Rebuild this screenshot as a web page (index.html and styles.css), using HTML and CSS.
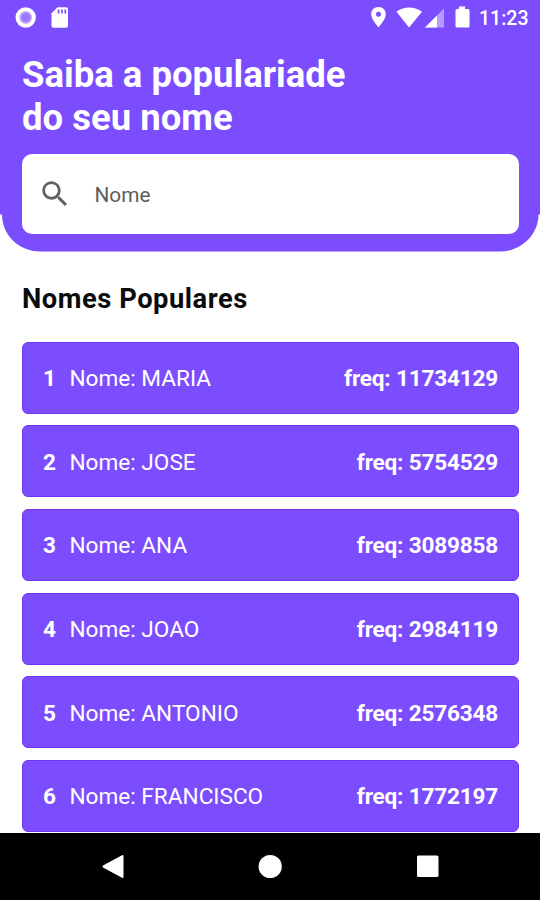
FILE: index.html
```html
<!DOCTYPE html>
<html lang="pt-BR">
<head>
<meta charset="utf-8">
<title>Nomes Populares</title>
<link rel="stylesheet" href="styles.css">
</head>
<body>
<header class="header">
  <div class="status">
    <svg class="status-left" width="60" height="36" viewBox="0 0 60 36">
      <circle cx="15.700" cy="17.5" r="8.2" fill="#b79bff" stroke="#fff" stroke-width="4"/>
      <circle cx="15.700" cy="17.5" r="4.3" fill="#9c78ff"/>
      <path fill="#fff" d="M47.5 7.2H56Q58 7.2 58 9.2V25.8Q58 27.8 56 27.8H43.500Q41.500 27.800 41.500 25.800V13.200Z"/>
      <path stroke="#7c4dff" stroke-width="1.7" d="M48.600 9.500v4M52 9.500v4M55.300 9.500v4"/>
    </svg>
    <svg class="status-right" width="104" height="36" viewBox="0 0 104 36">
      <path fill="#fff" fill-rule="evenodd" d="M10.500 7C6.200 7 3.200 10 3.200 14.300C3.200 19.400 10.500 27.500 10.500 27.500S17.800 19.400 17.800 14.300C17.800 10 14.800 7 10.500 7ZM10.500 11.800a2.500 2.500 0 1 1 0 5a2.500 2.500 0 0 1 0-5Z"/>
      <path fill="#fff" d="M28.500 11.700Q41 3.500 54 11.700L41 27.500Z"/>
      <path fill="#b79bff" d="M76 8.500V27.500H57Z"/>
      <path fill="#fff" d="M69 15.500V27.500H57Z"/>
      <path fill="#fff" d="M91 6.500h6V9h3Q101.500 9 101.500 10.500V26Q101.500 27.500 100 27.500H89Q87.500 27.500 87.500 26V10.500Q87.500 9 89 9H91Z"/>
    </svg>
    <span class="clock">11:23</span>
  </div>
  <h1 class="title">Saiba a populariade<br>do seu nome</h1>
  <div class="search">
    <svg class="search-icon" width="34" height="34" viewBox="0 0 24 24"><path fill="#616161" d="M15.500 14h-.79l-.28-.27A6.471 6.471 0 0 0 16 9.500 6.500 6.500 0 1 0 9.500 16c1.610 0 3.090-.59 4.230-1.570l.27.28v.79l5 4.990L20.490 19l-4.990-5zm-6 0C7.010 14 5 11.990 5 9.500S7.010 5 9.500 5 14 7.010 14 9.500 11.990 14 9.500 14z"/></svg>
    <span class="placeholder">Nome</span>
  </div>
</header>
<main class="content">
  <h2 class="subtitle">Nomes Populares</h2>
  <ul class="list">
    <li class="row"><b class="rank">1</b><span class="name">Nome: MARIA</span><b class="freq">freq: 11734129</b></li>
    <li class="row"><b class="rank">2</b><span class="name">Nome: JOSE</span><b class="freq">freq: 5754529</b></li>
    <li class="row"><b class="rank">3</b><span class="name">Nome: ANA</span><b class="freq">freq: 3089858</b></li>
    <li class="row"><b class="rank">4</b><span class="name">Nome: JOAO</span><b class="freq">freq: 2984119</b></li>
    <li class="row"><b class="rank">5</b><span class="name">Nome: ANTONIO</span><b class="freq">freq: 2576348</b></li>
    <li class="row"><b class="rank">6</b><span class="name">Nome: FRANCISCO</span><b class="freq">freq: 1772197</b></li>
  </ul>
</main>
<nav class="navbar">
  <svg width="540" height="67" viewBox="0 0 540 67" fill="#fff">
    <path d="M122 22.300Q123.500 21.500 123.500 23V44Q123.500 45.500 122 44.700L103 34.500Q102 33.500 103 32.500Z"/>
    <circle cx="270.200" cy="33.500" r="11.600"/>
    <rect x="417" y="22.500" width="21.500" height="21.500" rx="1.500"/>
  </svg>
</nav>
</body>
</html>
```

FILE: styles.css
```css
* { box-sizing: border-box; }
body {
  margin: 0;
  width: 540px;
  height: 900px;
  overflow: hidden;
  display: flex;
  flex-direction: column;
  background: #fff;
  font-family: Roboto, sans-serif;
}
.header {
  flex: none;
  height: 252px;
  padding: 0 21px 0 22px;
  background: #7c4dff;
  color: #fff;
  clip-path: path("M0 0H540V214.500H538.500C538.500 235 521 251.500 500 251.500H40C19 251.500 2 235 2 214.500H0Z");
}
.status {
  display: flex;
  height: 36px;
  margin: 0 -11px 0 -12px;
}
.status-right { margin-left: 298px; }
.clock {
  margin-left: 7px;
  font-size: 19.500px;
  font-weight: 500;
  line-height: 37px;
}
.title {
  margin: 17px 0 0;
  font-size: 36.500px;
  font-weight: 700;
  line-height: 43px;
}
.search {
  display: flex;
  align-items: center;
  height: 80px;
  margin-top: 15px;
  padding-left: 16px;
  border-radius: 10px;
  background: #fff;
}
.placeholder {
  margin-left: 22.500px;
  padding-top: 2px;
  font-size: 20.800px;
  color: #5c5c5c;
}
.content {
  flex: none;
  height: 581px;
  padding: 29px 21px 0 22px;
}
.subtitle {
  margin: 0;
  font-size: 27.300px;
  font-weight: 700;
  line-height: 36px;
  letter-spacing: 0.550px;
  color: #0b0b0b;
}
.list {
  display: flex;
  flex-direction: column;
  gap: 11.700px;
  margin: 24.500px 0 0;
  padding: 0;
  list-style: none;
}
.row {
  display: flex;
  align-items: center;
  height: 72px;
  padding: 2px 20px 0;
  border: 1px solid #6e36f0;
  border-radius: 6px;
  background: #7c4dff;
  color: #fff;
  font-size: 22.600px;
}
.rank { width: 26.500px; }
.name { flex: 1; }
.freq { letter-spacing: -0.200px; }
.navbar {
  height: 67px;
  background: #000;
}
.navbar svg { display: block; }
```
